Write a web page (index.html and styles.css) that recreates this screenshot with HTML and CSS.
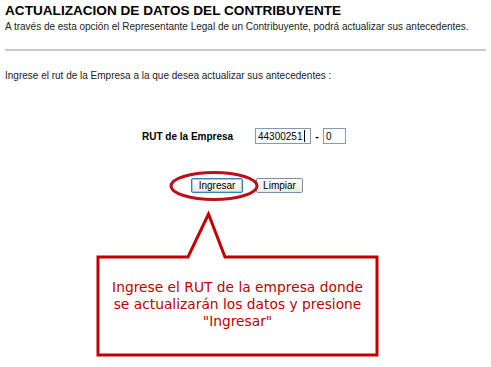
FILE: index.html
```html
<!DOCTYPE html>
<html lang="es">
<head>
<meta charset="utf-8">
<link rel="stylesheet" href="styles.css">
</head>
<body>
<div class="page">
  <h1 class="title">ACTUALIZACION DE DATOS DEL CONTRIBUYENTE</h1>
  <p class="subtitle">A través de esta opción el Representante Legal de un Contribuyente, podrá actualizar sus antecedentes.</p>
  <hr class="rule">
  <p class="intro">Ingrese el rut de la Empresa a la que desea actualizar sus antecedentes :</p>
  <div class="form-row">
    <span class="label">RUT de la Empresa</span>
    <span class="input rut">44300251<span class="caret"></span></span>
    <span class="dash">-</span>
    <span class="input dv">0</span>
  </div>
  <div class="buttons">
    <span class="btn btn-primary">Ingresar</span>
    <span class="btn">Limpiar</span>
  </div>
  <svg class="annot" width="491" height="367" viewBox="0 0 491 367">
    <ellipse cx="214" cy="186" rx="43" ry="13.5" fill="none" stroke="#b5121b" stroke-width="3"/>
    <path d="M98 257 L188 257 L208.5 214 L225 257 L377 257 L377 355 L98 355 Z" fill="#fff" stroke="#c00000" stroke-width="3" stroke-linejoin="miter"/>
  </svg>
  <div class="callout-text">Ingrese el RUT de la empresa donde<br>se actualizarán los datos y presione<br>"Ingresar"</div>
</div>
</body>
</html>
```
FILE: styles.css
```css
html, body {
  margin: 0;
  padding: 0;
  background: #fff;
}
.page {
  position: relative;
  width: 491px;
  height: 367px;
  padding: 2px 5px 0 5px;
  box-sizing: border-box;
  font-family: "Liberation Sans", Arial, sans-serif;
  color: #000;
  overflow: hidden;
}
.title {
  margin: 0;
  font-size: 13.6px;
  line-height: 18px;
  font-weight: bold;
  white-space: nowrap;
}
.subtitle {
  margin: 0;
  font-size: 10px;
  line-height: 13px;
  color: #222;
  white-space: nowrap;
}
.rule {
  margin: 16px 0 0 0;
  border: 0;
  height: 2px;
  background: #c9c9bd;
}
.intro {
  margin: 18px 0 0 0;
  font-size: 10px;
  line-height: 13px;
  color: #222;
  white-space: nowrap;
}
.form-row {
  display: flex;
  align-items: center;
  margin: 46px 0 0 137px;
  height: 16px;
}
.label {
  font-weight: bold;
  font-size: 10px;
  width: 113px;
  white-space: nowrap;
}
.input {
  display: inline-flex;
  align-items: center;
  box-sizing: border-box;
  height: 16px;
  border: 1px solid #7f9db9;
  font-size: 10px;
  padding-left: 2px;
  background: #fff;
}
.rut { width: 56px; }
.dv { width: 23px; }
.caret {
  display: inline-block;
  width: 1px;
  height: 12px;
  background: #000;
  margin-left: 1px;
}
.dash {
  width: 12px;
  text-align: center;
  font-size: 11px;
  font-weight: bold;
}
.buttons {
  display: flex;
  gap: 13px;
  margin: 34px 0 0 186px;
}
.btn {
  display: inline-flex;
  align-items: center;
  justify-content: center;
  box-sizing: border-box;
  height: 15px;
  width: 47px;
  font-size: 10px;
  border: 1px solid #7a8fa6;
  border-radius: 2px;
  background: linear-gradient(#ffffff, #eceae0);
}
.btn-primary {
  width: 52px;
  border-color: #3c7fb1;
  box-shadow: inset 0 0 0 1px #a8c8ec;
}
.annot {
  position: absolute;
  left: 0;
  top: 0;
}
.callout-text {
  position: absolute;
  left: 98px;
  top: 279px;
  width: 279px;
  text-align: center;
  font-family: "DejaVu Sans", Verdana, sans-serif;
  font-size: 13.8px;
  line-height: 17px;
  color: #c00000;
}
```
